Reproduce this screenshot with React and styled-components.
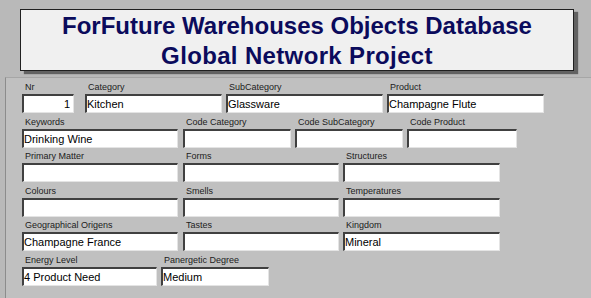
import styled, { createGlobalStyle } from 'styled-components'

const GlobalStyle = createGlobalStyle`
  html, body {
    margin: 0;
    padding: 0;
    background: #b9b9b9;
    font-family: "Liberation Sans", Arial, sans-serif;
  }
`

const rows = [
  {
    gaps: [11, 4, 4],
    fields: [
      { label: 'Nr', width: 52, value: '1', align: 'right' },
      { label: 'Category', width: 137, value: 'Kitchen' },
      { label: 'SubCategory', width: 157, value: 'Glassware' },
      { label: 'Product', width: 157, value: 'Champagne Flute' }
    ]
  },
  {
    gaps: [5, 4, 4],
    fields: [
      { label: 'Keywords', width: 156, value: 'Drinking Wine' },
      { label: 'Code Category', width: 108 },
      { label: 'Code SubCategory', width: 108 },
      { label: 'Code Product', width: 110 }
    ]
  },
  {
    gaps: [5, 4],
    fields: [
      { label: 'Primary Matter', width: 156 },
      { label: 'Forms', width: 156 },
      { label: 'Structures', width: 157 }
    ]
  },
  {
    gaps: [5, 4],
    fields: [
      { label: 'Colours', width: 156 },
      { label: 'Smells', width: 156 },
      { label: 'Temperatures', width: 157 }
    ]
  },
  {
    gaps: [5, 4],
    fields: [
      { label: 'Geographical Origens', width: 156, value: 'Champagne France' },
      { label: 'Tastes', width: 156 },
      { label: 'Kingdom', width: 157, value: 'Mineral' }
    ]
  },
  {
    gaps: [4],
    fields: [
      { label: 'Energy Level', width: 135, value: '4 Product Need' },
      { label: 'Panergetic Degree', width: 108, value: 'Medium' }
    ]
  }
]

export default function App() {
  return (
    <Page>
      <GlobalStyle />
      <Header>
        <TitleBox>
          <TitleLine>ForFuture Warehouses Objects Database</TitleLine>
          <TitleLine $spacing={0.35}>Global Network Project</TitleLine>
        </TitleBox>
      </Header>
      <Panel>
        {rows.map((row, r) => (
          <Row key={r}>
            {row.fields.map((f, i) => (
              <Field key={f.label} $width={f.width} $offset={i === 0 ? 0 : row.gaps[i - 1]}>
                <Label>{f.label}</Label>
                <TextBox readOnly value={f.value || ''} $align={f.align} />
              </Field>
            ))}
          </Row>
        ))}
      </Panel>
    </Page>
  )
}

const Page = styled.div`
  width: 591px;
  height: 298px;
  overflow: hidden;
  display: flex;
  flex-direction: column;
`

const Header = styled.div`
  flex: none;
  padding: 9px 0 0 20px;
  height: 77px;
  box-sizing: border-box;
`

const TitleBox = styled.div`
  width: 554px;
  height: 62px;
  box-sizing: border-box;
  padding-top: 1px;
  background: #f0f0f0;
  border: 1px solid #202020;
  box-shadow: 4px 3px 1px rgba(40, 40, 40, 0.6);
  display: flex;
  flex-direction: column;
  align-items: center;
`

const TitleLine = styled.div`
  font-size: 24px;
  line-height: 30px;
  font-weight: bold;
  color: #0b0b5c;
  letter-spacing: ${p => p.$spacing || 0}px;
  white-space: nowrap;
`

const Panel = styled.div`
  flex: 1;
  margin-left: 5px;
  border-top: 1px solid #a6a6a6;
  border-left: 1px solid #8c8c8c;
  background: #c0c0c0;
  padding: 3px 0 0 16px;
  display: flex;
  flex-direction: column;
  gap: 2.6px;
`

const Row = styled.div`
  display: flex;
`

const Field = styled.div`
  width: ${p => p.$width}px;
  margin-left: ${p => p.$offset}px;
  display: flex;
  flex-direction: column;
`

const Label = styled.div`
  font-size: 9px;
  line-height: 12px;
  height: 12px;
  margin: 0 0 1px 3px;
  color: #202020;
  white-space: nowrap;
`

const TextBox = styled.input`
  width: 100%;
  height: 19px;
  box-sizing: border-box;
  margin: 0;
  padding: 0 ${p => (p.$align === 'right' ? 3 : 0)}px 0 0;
  font-family: "Liberation Sans", Arial, sans-serif;
  font-size: 11px;
  color: #000;
  background: #fff;
  text-align: ${p => p.$align || 'left'};
  border-top: 2px solid #404040;
  border-left: 2px solid #404040;
  border-right: 1px solid #e4e4e4;
  border-bottom: 1px solid #e4e4e4;
  outline: none;
  border-radius: 0;
`
